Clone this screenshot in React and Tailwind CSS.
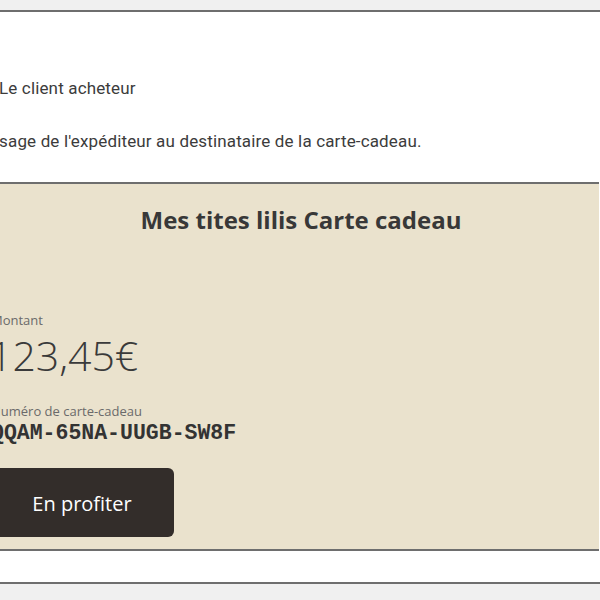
export default function App() {
  return (
    <div className="min-h-[600px] w-[600px] overflow-hidden bg-[#f0f0f0] pt-[10px]">
      <div className="w-[620px] border-y-2 border-[#6e6e6e] bg-white">
        {/* top info */}
        <div
          className="h-[170px] pt-[65px] text-[17px] leading-[22px] tracking-[0.15px] text-[#3c3c3c]"
          style={{ fontFamily: "Roboto, 'Noto Sans', sans-serif" }}
        >
          <div className="-ml-[1px]">Le client acheteur</div>
          <div className="-ml-[34px] mt-[31px]">Message de l'expéditeur au destinataire de la carte-cadeau.</div>
        </div>

        {/* gift card */}
        <div
          className="-ml-[20px] w-[619px] border-y-2 border-[#6e6e6e] bg-[#eae2cd] pb-[12px] pl-[11px] pt-[20px] text-[#363636]"
          style={{ fontFamily: "'Open Sans', 'Noto Sans', sans-serif" }}
        >
          <div className="pl-[12px] text-center text-[24px] font-bold leading-[32px] text-[#383838]">
            Mes tites lilis Carte cadeau
          </div>

          <div className="mt-[75px] text-[13px] leading-[18px] text-[#6a6a6a]">Montant</div>
          <div className="-ml-[2px] mt-[4px] text-[41px] font-light leading-[44px] text-[#3a3a3a]">123,45€</div>

          <div className="mt-[25px] text-[13px] leading-[18px] text-[#6a6a6a]">Numéro de carte-cadeau</div>
          <div
            className="mt-[1px] text-[21.5px] font-bold leading-[24px] text-[#333]"
            style={{ fontFamily: "'Liberation Mono', 'Courier New', monospace" }}
          >
            QQAM-65NA-UUGB-SW8F
          </div>

          <button className="-ml-[1px] mt-[23px] flex h-[69px] w-[184px] items-center justify-center rounded-[6px] bg-[#332d2a] pt-[2px] text-[20px] text-white">
            En profiter
          </button>
        </div>

        <div className="h-[31px]" />
      </div>
    </div>
  );
}
